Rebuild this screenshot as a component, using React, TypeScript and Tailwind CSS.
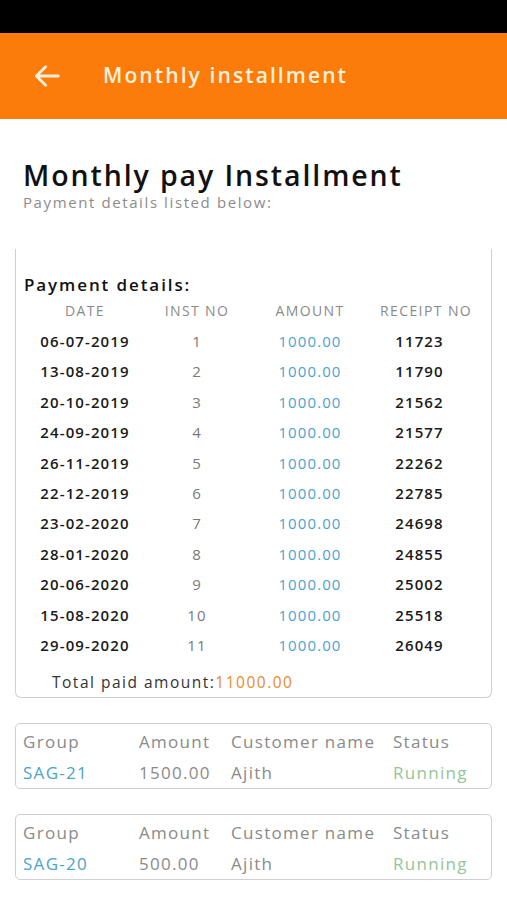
import React from "react";

const payments = [
  ["06-07-2019", "1", "1000.00", "11723"],
  ["13-08-2019", "2", "1000.00", "11790"],
  ["20-10-2019", "3", "1000.00", "21562"],
  ["24-09-2019", "4", "1000.00", "21577"],
  ["26-11-2019", "5", "1000.00", "22262"],
  ["22-12-2019", "6", "1000.00", "22785"],
  ["23-02-2020", "7", "1000.00", "24698"],
  ["28-01-2020", "8", "1000.00", "24855"],
  ["20-06-2020", "9", "1000.00", "25002"],
  ["15-08-2020", "10", "1000.00", "25518"],
  ["29-09-2020", "11", "1000.00", "26049"],
];

const groups = [
  { group: "SAG-21", amount: "1500.00", name: "Ajith", status: "Running" },
  { group: "SAG-20", amount: "500.00", name: "Ajith", status: "Running" },
];

function GroupCard({ g }: { g: (typeof groups)[number] }) {
  return (
    <div className="mx-[15px] border border-[#cfcfcf] rounded-[5px] px-[7px] pt-[2px] text-[17px] leading-[31px] tracking-[1.3px] whitespace-nowrap">
      <div className="grid grid-cols-[116px_92px_162px_1fr] text-[#8a8a8a]">
        <div>Group</div>
        <div>Amount</div>
        <div>Customer name</div>
        <div>Status</div>
      </div>
      <div className="grid grid-cols-[116px_92px_162px_1fr]">
        <div className="text-[#4aa3cf]">{g.group}</div>
        <div className="text-[#8a8a8a]">{g.amount}</div>
        <div className="text-[#8a8a8a]">{g.name}</div>
        <div className="text-[#94c597]">{g.status}</div>
      </div>
    </div>
  );
}

export default function App() {
  return (
    <div className="w-[507px] h-[900px] bg-white overflow-hidden" style={{ fontFamily: '"Open Sans", "Noto Sans", sans-serif' }}>
      <div className="h-[33px] bg-black" />
      <div className="h-[86px] bg-[#fb7c0b] flex items-center pb-[1px]">
        <svg className="ml-[31px] w-[32px] h-[32px]" viewBox="0 0 24 24" fill="none" stroke="#fdf1dc" strokeWidth="2.1" strokeLinecap="round" strokeLinejoin="round">
          <path d="M20.5 12H4M11 5l-7 7 7 7" />
        </svg>
        <div className="ml-[40px] text-[21px] font-semibold text-[#fdf1dc] tracking-[2.1px]">Monthly installment</div>
      </div>

      <div className="px-[23px] pt-[39px]">
        <div className="text-[28.5px] leading-[34px] font-semibold text-[#111] tracking-[1.9px]">Monthly pay Installment</div>
        <div className="text-[15px] leading-[20px] text-[#8c8c8c] tracking-[1.6px]">Payment details listed below:</div>
      </div>

      <div className="mx-[15px] mt-[37px] border-x border-b border-[#cfcfcf] rounded-b-[6px] pt-[24px] pb-[1px]">
        <div className="pl-[8px] text-[17px] leading-[24px] font-semibold text-[#111] tracking-[1.9px]">Payment details:</div>
        <div className="grid grid-cols-[138px_86px_140px_1fr] pr-[32px] text-[14px] leading-[24px] text-[#8a8a8a] text-center mt-[2px] tracking-[1.4px] whitespace-nowrap">
          <div>DATE</div>
          <div>INST NO</div>
          <div>AMOUNT</div>
          <div>RECEIPT NO</div>
        </div>
        <div className="mt-[3px]">
          {payments.map((p) => (
            <div key={p[0]} className="grid grid-cols-[138px_86px_140px_1fr] pr-[32px] text-[15px] leading-[30.4px] text-center tracking-[1.1px] whitespace-nowrap">
              <div className="font-semibold text-[#1a1a1a]">{p[0]}</div>
              <div className="text-[#7a7a7a]">{p[1]}</div>
              <div className="text-[#4aa3cf]">{p[2]}</div>
              <div className="font-semibold text-[#1a1a1a]">{p[3]}</div>
            </div>
          ))}
        </div>
        <div className="pl-[36px] mt-[8px] text-[15.5px] leading-[28px] text-[#333] tracking-[1.5px]">
          Total paid amount:<span className="text-[#e58b2b]">11000.00</span>
        </div>
      </div>

      <div className="mt-[25px] flex flex-col gap-[25px]">
        {groups.map((g) => (
          <GroupCard key={g.group} g={g} />
        ))}
      </div>
    </div>
  );
}
